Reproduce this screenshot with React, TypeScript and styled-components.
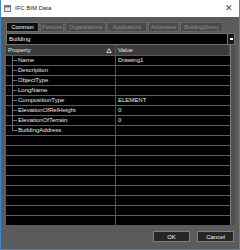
import React from "react";
import styled, { createGlobalStyle } from "styled-components";

const Global = createGlobalStyle`
  html, body { margin: 0; padding: 0; background: #5b5b5b; }
  * { box-sizing: border-box; }
  body { font-family: "Liberation Sans", Arial, sans-serif; }
`;

const Window = styled.div`
  width: 240px;
  height: 250px;
  display: flex;
  flex-direction: column;
  border: 1px solid #3a86d4;
  border-top: none;
  background: #5b5b5b;
  overflow: hidden;
`;

const TitleBar = styled.div`
  height: 17px;
  flex: none;
  background: #ffffff;
  display: flex;
  align-items: center;
  padding: 0 6px 0 3px;
  gap: 4px;
  font-size: 6px;
  color: #222;
`;

const TitleText = styled.span`
  flex: 1;
  line-height: 17px;
`;

const Close = styled.span`
  font-size: 9px;
  color: #444;
  line-height: 17px;
`;

const Body = styled.div`
  flex: 1;
  display: flex;
  flex-direction: column;
  padding: 5px 4px 6px 5px;
  font-size: 6px;
`;

const Tabs = styled.div`
  display: flex;
  gap: 1px;
  height: 10px;
`;

const Tab = styled.div<{ $active?: boolean; $w: number }>`
  width: ${(p) => p.$w}px;
  height: 10px;
  line-height: 8px;
  text-align: center;
  font-size: 5.6px;
  letter-spacing: -0.1px;
  border: 1px solid ${(p) => (p.$active ? "#6e6e6e" : "#646464")};
  background: ${(p) => (p.$active ? "#0e0e0e" : "#4a4a4a")};
  color: ${(p) => (p.$active ? "#ffffff" : "#8c8c8c")};
  white-space: nowrap;
  overflow: hidden;
`;

const Select = styled.div`
  margin-top: 1px;
  height: 12px;
  border: 1px solid #707070;
  background: #000;
  display: flex;
  align-items: center;
  color: #f0f0f0;
  padding-left: 2px;
`;

const SelectText = styled.span`
  flex: 1;
`;

const SelectButton = styled.div`
  width: 7px;
  height: 10px;
  border-left: 1px solid #777;
  background: #1a1a1a;
  display: flex;
  align-items: center;
  justify-content: center;
`;

const Dot = styled.div`
  width: 3px;
  height: 2px;
  background: #fff;
`;

const GridWrap = styled.div`
  display: flex;
  height: 180px;
`;

const Grid = styled.div`
  width: 225px;
  display: flex;
  flex-direction: column;
  background: #000;
  border-right: 1px solid #7a7a7a;
`;

const Track = styled.div`
  flex: 1;
  background: #505050;
`;

const HeaderRow = styled.div`
  height: 10px;
  display: flex;
  background: #3b3b3b;
  color: #e6e6e6;
  line-height: 10px;
`;

const HeadCell = styled.div<{ $w?: number }>`
  ${(p) => (p.$w ? `width: ${p.$w}px;` : "flex: 1;")}
  display: flex;
  align-items: center;
  padding-left: 2px;
  border-right: 1px solid #555;
`;

const HeadLabel = styled.span`
  flex: 1;
`;

const Row = styled.div`
  height: 10px;
  display: flex;
  border-top: 1px solid #5c5c5c;
  line-height: 9px;
  color: #e8e8e8;
`;

const PropCell = styled.div<{ $last?: boolean; $tree?: boolean }>`
  width: 110px;
  position: relative;
  padding-left: 12px;
  border-right: 1px solid #555;
  white-space: nowrap;
  &::before {
    content: "";
    display: ${(p) => (p.$tree ? "block" : "none")};
    position: absolute;
    left: 6px;
    top: 4px;
    width: 5px;
    height: 1px;
    background: #6e6e6e;
  }
  &::after {
    content: "";
    display: ${(p) => (p.$tree ? "block" : "none")};
    position: absolute;
    left: 6px;
    top: -1px;
    width: 1px;
    height: ${(p) => (p.$last ? "6px" : "10px")};
    background: #6e6e6e;
  }
`;

const ValueCell = styled.div`
  flex: 1;
  padding-left: 2px;
  color: #f2ead8;
  white-space: nowrap;
`;

const Footer = styled.div`
  margin-top: 6px;
  display: flex;
  justify-content: flex-end;
  gap: 7px;
  padding-right: 1px;
`;

const Button = styled.div`
  width: 37px;
  height: 11px;
  background: #262626;
  border: 1px solid #808080;
  color: #f4f4f4;
  display: flex;
  align-items: center;
  justify-content: center;
`;

const tabs: [string, number][] = [
  ["Common", 33],
  ["Persons", 24],
  ["Organizations", 41],
  ["Applications", 40],
  ["Addresses", 31],
  ["BuildingStorey", 43],
];

const rows: [string, string][] = [
  ["Name", "Drawing1"],
  ["Description", ""],
  ["ObjectType", ""],
  ["LongName", ""],
  ["CompositionType", "ELEMENT"],
  ["ElevationOfRefHeight", "0"],
  ["ElevationOfTerrain", "0"],
  ["BuildingAddress", ""],
];

export default function App() {
  const empty = Array.from({ length: 9 });
  return (
    <>
      <Global />
      <Window>
        <TitleBar>
          <svg width="7" height="7" viewBox="0 0 7 7">
            <rect x="0.5" y="0.5" width="6" height="6" fill="#e8e8e8" stroke="#7a7a7a" />
            <rect x="1" y="1" width="5" height="1.5" fill="#5a7fa8" />
          </svg>
          <TitleText>IFC BIM Data</TitleText>
          <Close>✕</Close>
        </TitleBar>
        <Body>
          <Tabs>
            {tabs.map(([t, w], i) => (
              <Tab key={t} $w={w} $active={i === 0}>
                {t}
              </Tab>
            ))}
          </Tabs>
          <Select>
            <SelectText>Building</SelectText>
            <SelectButton>
              <Dot />
            </SelectButton>
          </Select>
          <GridWrap>
            <Grid>
              <HeaderRow>
                <HeadCell $w={110}>
                  <HeadLabel>Property</HeadLabel>
                  <svg width="6" height="5" viewBox="0 0 6 5" style={{ marginRight: 3 }}>
                    <path d="M3 0.7 L5.3 4.5 L0.7 4.5 Z" fill="none" stroke="#dcdcdc" strokeWidth="0.9" />
                  </svg>
                </HeadCell>
                <HeadCell>Value</HeadCell>
              </HeaderRow>
              {rows.map(([k, v], i) => (
                <Row key={k}>
                  <PropCell $tree $last={i === rows.length - 1}>
                    {k}
                  </PropCell>
                  <ValueCell>{v}</ValueCell>
                </Row>
              ))}
              {empty.map((_, i) => (
                <Row key={"e" + i}>
                  <PropCell />
                  <ValueCell />
                </Row>
              ))}
            </Grid>
            <Track />
          </GridWrap>
          <Footer>
            <Button>OK</Button>
            <Button>Cancel</Button>
          </Footer>
        </Body>
      </Window>
    </>
  );
}
